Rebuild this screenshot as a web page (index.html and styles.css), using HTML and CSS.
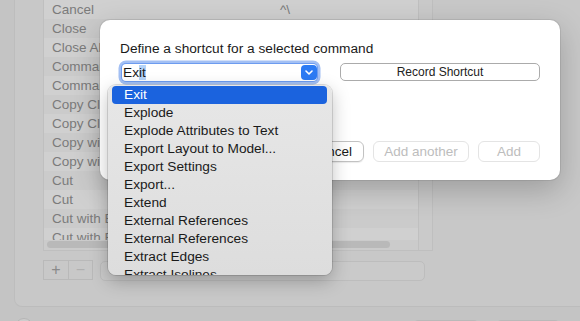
FILE: index.html
```html
<!DOCTYPE html>
<html lang="en">
<head>
  <meta charset="UTF-8">
  <title>Shortcuts</title>
  <link rel="stylesheet" href="styles.css">
</head>
<body>
  <!-- Fenêtre de fond (assombrie par la feuille) -->
  <div class="panel">
    <div class="table">
      <div class="list">
        <div class="rows">
          <div class="row"><span class="cmd">Cancel</span><span>^\</span></div>
          <div class="row"><span class="cmd">Close</span></div>
          <div class="row"><span class="cmd">Close All</span></div>
          <div class="row"><span class="cmd">Command Line</span></div>
          <div class="row"><span class="cmd">Command Line</span></div>
          <div class="row"><span class="cmd">Copy Clip</span></div>
          <div class="row"><span class="cmd">Copy Clip</span></div>
          <div class="row"><span class="cmd">Copy with Base Point</span></div>
          <div class="row"><span class="cmd">Copy with Base Point</span></div>
          <div class="row"><span class="cmd">Cut</span></div>
          <div class="row"><span class="cmd">Cut</span></div>
          <div class="row"><span class="cmd">Cut with Base Point</span></div>
          <div class="row"><span class="cmd">Cut with Base Point</span></div>
        </div>
        <div class="hscroll"><div class="thumb"></div></div>
      </div>
      <div class="vcol"></div>
    </div>
    <div class="controls">
      <div class="seg"><span>+</span><span class="minus">−</span></div>
      <div class="field"></div>
    </div>
  </div>
  <div class="footer">
    <span class="help"></span>
    <span class="fbtn first"></span>
    <span class="fbtn"></span>
  </div>

  <!-- Feuille de dialogue -->
  <div class="dialog">
    <div class="title">Define a shortcut for a selected command</div>
    <div class="pick">
      <div class="combo">
        <span class="value">Ex<span class="sel">it</span></span>
        <span class="chev">
          <svg width="8" height="5" viewBox="0 0 8 5"><polyline points="1,1 4,4 7,1" fill="none" stroke="#fff" stroke-width="1.6" stroke-linecap="round" stroke-linejoin="round"/></svg>
        </span>
      </div>
      <div class="record">Record Shortcut</div>
    </div>
    <div class="actions">
      <div class="btn cancel">Cancel</div>
      <div class="btn off another">Add another</div>
      <div class="btn off add">Add</div>
    </div>
  </div>

  <!-- Menu déroulant ouvert -->
  <div class="menu">
    <div class="item active">Exit</div>
    <div class="item">Explode</div>
    <div class="item">Explode Attributes to Text</div>
    <div class="item">Export Layout to Model...</div>
    <div class="item">Export Settings</div>
    <div class="item">Export...</div>
    <div class="item">Extend</div>
    <div class="item">External References</div>
    <div class="item">External References</div>
    <div class="item">Extract Edges</div>
    <div class="item">Extract Isolines</div>
  </div>
</body>
</html>
```

FILE: styles.css
```css
* {
  box-sizing: border-box;
}
html {
  overflow: hidden;
}
body {
  margin: 0;
  width: 580px;
  height: 321px;
  overflow: hidden;
  position: relative;
  background: #c4c4c4;
  font-family: "Liberation Sans", Arial, sans-serif;
  font-size: 13px;
}

/* Panneau de la fenêtre de fond */
.panel {
  margin: -10px 0 0 14px;
  height: 317px;
  padding: 9px 0 0 28px;
  background: #c8c8c8;
  border-left: 1px solid #bdbdbd;
  border-bottom: 1px solid #bcbcbc;
  border-bottom-left-radius: 8px;
  display: flex;
  flex-direction: column;
}
.table {
  display: flex;
  width: 390px;
  border: 1px solid #bfbfbf;
}
.list {
  width: 375px;
  border-right: 1px solid #c0c0c0;
  background: #cdcdcd;
}
.rows {
  height: 240px;
  overflow: hidden;
}
.row {
  display: flex;
  height: 19px;
  line-height: 19px;
  padding-left: 8px;
  color: #7b7b7b;
  font-size: 13.5px;
  white-space: nowrap;
}
.row:nth-child(odd) {
  background: #d0d0d0;
}
.row:nth-child(even) {
  background: #cbcbcb;
}
.cmd {
  width: 228px;
}
.hscroll {
  height: 10px;
  padding: 1px 0 0 3px;
  background: #cbcbcb;
}
.thumb {
  width: 343px;
  height: 7px;
  border-radius: 4px;
  background: #b9b9b9;
}
.vcol {
  flex: 1;
  background: #cacaca;
}
.controls {
  display: flex;
  align-items: flex-start;
  margin-top: 9px;
}
.seg {
  display: flex;
  border: 1px solid #b9b9b9;
}
.seg span {
  width: 24px;
  height: 18px;
  line-height: 17px;
  text-align: center;
  font-size: 16px;
  color: #8a8a8a;
}
.seg .minus {
  border-left: 1px solid #b9b9b9;
  color: #b0b0b0;
}
.field {
  width: 325px;
  height: 20px;
  margin: 1px 0 0 7px;
  border: 1px solid #bdbdbd;
  border-radius: 5px;
  background: #cacaca;
}
.footer {
  display: flex;
  height: 14px;
  overflow: hidden;
  padding-left: 15px;
}
.help {
  flex: none;
  width: 18px;
  height: 18px;
  margin-top: 11px;
  border-radius: 50%;
  border: 1px solid #b5b5b5;
  background: #cdcdcd;
}
.fbtn {
  flex: none;
  width: 64px;
  height: 20px;
  margin: 13px 0 0 17px;
  border: 1px solid #b9b9b9;
  border-radius: 5px;
  background: #cbcbcb;
}
.fbtn.first {
  width: 66px;
  margin-left: 380px;
}

/* Feuille de dialogue */
.dialog {
  position: absolute;
  left: 100px;
  top: 20px;
  width: 460px;
  height: 160px;
  padding: 21px 20px 0 18px;
  background: #fff;
  border-radius: 10px;
  box-shadow: 0 10px 30px rgba(0, 0, 0, 0.22), 0 0 0 1px rgba(0, 0, 0, 0.07);
  color: #1a1a1a;
  font-size: 13.7px;
}
.title {
  margin-left: 2px;
  line-height: 16px;
}
.pick {
  display: flex;
  align-items: flex-start;
  margin-top: 7px;
}
.combo {
  display: flex;
  align-items: center;
  width: 195px;
  height: 17px;
  margin-left: 4px;
  border-radius: 4px;
  background: #fff;
  box-shadow: 0 0 0 1px #6d9cf0, 0 0 0 3.5px #a3c0f4;
}
.value {
  flex: 1;
  padding-left: 1px;
  line-height: 15px;
}
.sel {
  background: #b4d3f9;
}
.chev {
  display: flex;
  align-items: center;
  justify-content: center;
  width: 16px;
  height: 15px;
  border-radius: 4px;
  background: #2c7bf4;
}
.record {
  width: 200px;
  height: 18px;
  margin: -1px 0 0 23px;
  border: 1px solid #ababab;
  border-radius: 5px;
  text-align: center;
  line-height: 16px;
  font-size: 12px;
  color: #222;
}
.actions {
  display: flex;
  justify-content: flex-end;
  gap: 9px;
  margin-top: 60px;
}
.btn {
  height: 21px;
  line-height: 19px;
  border-radius: 6px;
  border: 1px solid #c2c2c2;
  text-align: center;
  font-size: 13.5px;
}
.cancel {
  width: 66px;
  box-shadow: 0 1px 1px rgba(0, 0, 0, 0.08);
}
.off {
  border-color: #e4e4e4;
  color: #bdbdbd;
}
.another {
  width: 96px;
}
.add {
  width: 62px;
}

/* Menu déroulant */
.menu {
  position: absolute;
  left: 108px;
  top: 85px;
  width: 224px;
  height: 190px;
  padding: 1px 5px 0 4px;
  overflow: hidden;
  border-radius: 8px;
  background: linear-gradient(#e7e7e7, #dddddd);
  box-shadow: 0 6px 18px rgba(0, 0, 0, 0.25), 0 0 0 1px rgba(0, 0, 0, 0.12);
  color: #1a1a1a;
  font-size: 13.7px;
}
.item {
  height: 18px;
  line-height: 18px;
  padding-left: 12px;
  border-radius: 4px;
  white-space: nowrap;
}
.item.active {
  background: #1b63de;
  color: #fff;
}
```
